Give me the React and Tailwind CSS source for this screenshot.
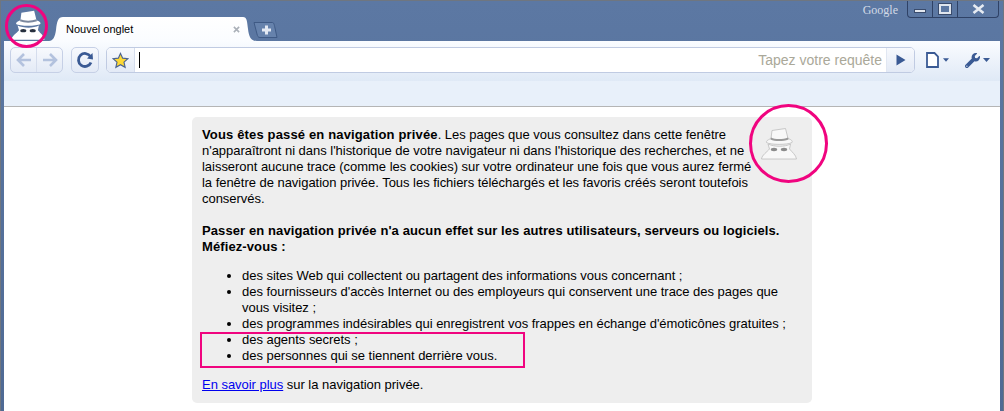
import React from "react";
import { FaWrench } from "react-icons/fa";

function Spy({ className, shadow }) {
  return (
    <svg viewBox="0 0 36 32" className={className}>
      <path d="M11 2.5 L24.5 0.5 L27 10.5 C30 11.5 32 13 31 14.5 C27 17 9 17 5.5 14.5 C5 12.5 8 11.5 10 10.5 Z" fill={shadow ? "#f8f8f8" : "#fff"} stroke={shadow ? "#bdbdbd" : "none"} strokeWidth="0.8" />
      <path d="M10 9.5 C14 11.5 22 11.5 27 9.5 L27.5 11.5 C22 13.5 14 13.5 9.5 11.5 Z" fill={shadow ? "#9a9a9a" : "#7b889e"} />
      <path d="M7 16 C13 19 24 19 29.5 16 L28.5 21 C31 24 35 27 35.5 31 H0.5 C1 27 6 24 8.5 21 Z" fill={shadow ? "#f8f8f8" : "#fff"} stroke={shadow ? "#bdbdbd" : "none"} strokeWidth="0.8" />
      <ellipse cx="13" cy="21.5" rx="3.2" ry="1.7" fill={shadow ? "#8a8a8a" : "#27303f"} />
      <ellipse cx="23" cy="21.5" rx="3.2" ry="1.7" fill={shadow ? "#8a8a8a" : "#27303f"} />
    </svg>
  );
}

function Btn({ className, children }) {
  return (
    <div className={"flex items-center justify-center border border-[#c6d0e6] bg-gradient-to-b from-[#f7f9fd] to-[#e3eaf6] " + className}>
      {children}
    </div>
  );
}

function Arrow({ flip }) {
  return (
    <svg viewBox="0 0 16 14" className={"w-[16px] h-[14px] " + (flip ? "-scale-x-100" : "")}>
      <path d="M8 1 L2 7 L8 13 M2.5 7 H15" fill="none" stroke="#b3c2de" strokeWidth="2.6" />
    </svg>
  );
}

export default function App() {
  const sans = "font-['Liberation_Sans',Arial,sans-serif]";
  return (
    <div className={"relative w-[1004px] h-[411px] overflow-hidden flex flex-col px-[3px] border border-[#6f7680] border-b-0 bg-gradient-to-b from-[#5c78a3] to-[#4f6a94] " + sans}>
      {/* tab strip */}
      <div className="relative h-[40px] shrink-0 flex items-end">
        <div className="ml-[7px] w-[34px] h-[31px] shrink-0">
          <Spy className="w-[34px] h-[31px]" />
        </div>
        <div className="relative ml-[4px] w-[208px] h-[24px] flex items-center shrink-0">
          <svg viewBox="0 0 208 24" className="absolute inset-0 w-[208px] h-[24px]">
            <defs>
              <linearGradient id="tab" x1="0" y1="0" x2="0" y2="1">
                <stop offset="0" stopColor="#ffffff" />
                <stop offset="1" stopColor="#fafcff" />
              </linearGradient>
            </defs>
            <path d="M0 24 C4 24 6 20 7 13 C8 4 9 0 14 0 H194 C198 0 198 4 199 12 C200 20 202 24 208 24 Z" fill="url(#tab)" />
          </svg>
          <span className="relative ml-[17px] text-[11px] leading-none text-black">Nouvel onglet</span>
          <svg viewBox="0 0 8 8" className="absolute left-[184px] top-[9px] w-[7px] h-[7px]">
            <path d="M1 1 L7 7 M7 1 L1 7" stroke="#aab0b8" strokeWidth="1.8" />
          </svg>
        </div>
        <div className="mb-[3px] -ml-[4px] w-[25px] h-[16px] flex items-center justify-center shrink-0">
          <svg viewBox="0 0 25 16" className="w-[25px] h-[16px]">
            <path d="M1 0.5 H19 C21 0.5 21 2 22 6 L24 15.5 H7 C5 15.5 4.5 14 4 12 Z" fill="#6682ac" stroke="#3f5a85" strokeWidth="1" />
            <path d="M13.5 3.5 V12.5 M9 8 H18" stroke="#e3e9f3" strokeWidth="3" />
          </svg>
        </div>
        <div className="flex-1" />
        <span className="self-start mt-0 mr-[9px] font-['Liberation_Serif',serif] text-[12px] leading-[18px] text-[#d3dae6]">Google</span>
        <div className="self-start mr-px flex h-[17px] border border-t-0 border-[#2f4266] rounded-b-[4px]">
          <div className="w-[25px] flex items-center justify-center border-r border-[#2f4266]">
            <div className="mt-[4px] w-[12px] h-[4px] bg-[#e3e8f0] border border-[#3a4c6d]" />
          </div>
          <div className="w-[25px] flex items-center justify-center border-r border-[#2f4266]">
            <div className="w-[12px] h-[10px] border-2 border-[#dfe5ee] outline outline-1 outline-[#3a4c6d]" />
          </div>
          <div className="flex-1 w-[40px] flex items-center justify-center">
            <svg viewBox="0 0 13 10" className="w-[13px] h-[10px]">
              <path d="M1.5 1 L11.5 9 M11.5 1 L1.5 9" stroke="#e6ebf2" strokeWidth="2.6" />
            </svg>
          </div>
        </div>
      </div>

      {/* toolbar */}
      <div className="h-[40px] shrink-0 flex items-start pt-[6px] pl-[6px] pr-[10px] bg-gradient-to-b from-[#fafcff] to-[#dfe9f6]">
        <Btn className="w-[53px] h-[26px] rounded-[5px]">
          <div className="flex-1 h-full flex items-center justify-center border-r border-[#d5dded]"><Arrow /></div>
          <div className="flex-1 h-full flex items-center justify-center"><Arrow flip /></div>
        </Btn>
        <Btn className="ml-[8px] w-[28px] h-[26px] rounded-[5px]">
          <svg viewBox="0 0 18 18" className="w-[18px] h-[18px]">
            <path d="M14.5 5.5 A6.5 6.5 0 1 0 15 11.5" fill="none" stroke="#3a5a94" strokeWidth="2.8" />
            <path d="M11 7.5 L17 8.5 L16.5 2 Z" fill="#3a5a94" />
          </svg>
        </Btn>
        <div className="ml-[7px] flex-1 h-[26px] flex rounded-[5px] border border-[#c0cbe2] overflow-hidden bg-white">
          <div className="w-[28px] flex items-center justify-center border-r border-[#d5dded] bg-gradient-to-b from-[#f7f9fd] to-[#e3eaf6]">
            <svg viewBox="0 0 18 18" className="w-[17px] h-[17px]">
              <path d="M9 1.5 L11.3 6.5 L16.8 7.1 L12.7 10.8 L13.9 16.2 L9 13.4 L4.1 16.2 L5.3 10.8 L1.2 7.1 L6.7 6.5 Z" fill="#fdd835" stroke="#4b6390" strokeWidth="1.2" />
            </svg>
          </div>
          <div className="flex-1 flex items-center pl-[4px] pr-[4px]">
            <div className="w-px h-[16px] bg-black" />
            <div className="flex-1" />
            <span className="text-[14px] leading-none text-[#aaa899]">Tapez votre requête</span>
          </div>
          <div className="w-[28px] flex items-center justify-center border-l border-[#e1e7f2] bg-gradient-to-b from-[#f7f9fd] to-[#e3eaf6]">
            <svg viewBox="0 0 10 12" className="w-[10px] h-[12px]">
              <path d="M0.5 0.5 L9.5 6 L0.5 11.5 Z" fill="#3a5a94" />
            </svg>
          </div>
        </div>
        <div className="ml-[11px] h-[26px] flex items-center gap-[4px]">
          <svg viewBox="0 0 13 16" className="w-[13px] h-[16px] shrink-0">
            <path d="M1 1 H8.5 L12 4.5 V15 H1 Z" fill="#fff" stroke="#3a5a94" strokeWidth="1.8" />
          </svg>
          <svg viewBox="0 0 7 4" className="w-[6px] h-[4px] shrink-0"><path d="M0 0 H7 L3.5 4 Z" fill="#3a5a94" /></svg>
        </div>
        <div className="ml-[16px] h-[26px] flex items-center gap-[3px]">
          <FaWrench className="w-[15px] h-[15px] text-[#3a5a94]" />
          <svg viewBox="0 0 7 4" className="w-[7px] h-[4px] shrink-0"><path d="M0 0 H7 L3.5 4 Z" fill="#3a5a94" /></svg>
        </div>
      </div>

      {/* bookmark strip */}
      <div className="h-[26px] shrink-0 bg-[#e8f0fa] border-b border-[#b5b5b5]" />

      {/* page */}
      <div className="flex-1 bg-white pt-[10px] pl-[188px] text-[13px] leading-[16px] tracking-[-0.03px] text-black">
        <div className="w-[620px] h-[286px] rounded-[5px] bg-[#eeeeee] p-[10px]">
          <Spy className="float-right mr-[5px] mt-px w-[36px] h-[32px]" shadow />
          <p className="whitespace-nowrap">
            <b className="tracking-[0.15px]">Vous êtes passé en navigation privée</b>. Les pages que vous consultez dans cette fenêtre<br />
            n'apparaîtront ni dans l'historique de votre navigateur ni dans l'historique des recherches, et ne<br />
            laisseront aucune trace (comme les cookies) sur votre ordinateur une fois que vous aurez fermé<br />
            la fenêtre de navigation privée. Tous les fichiers téléchargés et les favoris créés seront toutefois<br />
            conservés.
          </p>
          <p className="mt-[16px] font-bold whitespace-nowrap tracking-[0.1px]">
            Passer en navigation privée n'a aucun effet sur les autres utilisateurs, serveurs ou logiciels.<br />
            Méfiez-vous :
          </p>
          <ul className="mt-[13px] pl-[40px] list-disc whitespace-nowrap">
            <li>des sites Web qui collectent ou partagent des informations vous concernant ;</li>
            <li>des fournisseurs d'accès Internet ou des employeurs qui conservent une trace des pages que<br />vous visitez ;</li>
            <li>des programmes indésirables qui enregistrent vos frappes en échange d'émoticônes gratuites ;</li>
            <li>des agents secrets ;</li>
            <li>des personnes qui se tiennent derrière vous.</li>
          </ul>
          <p className="mt-[13px]">
            <a href="#" className="text-[#0000ee] underline">En savoir plus</a> sur la navigation privée.
          </p>
        </div>
      </div>

      {/* annotations */}
      <div className="absolute left-[4px] top-[3px] w-[43px] h-[44px] rounded-full border-[3px] border-[#f0047f]" />
      <div className="absolute left-[748px] top-[103px] w-[79px] h-[79px] rounded-full border-[3px] border-[#f0047f]" />
      <div className="absolute left-[199px] top-[331px] w-[325px] h-[36px] border-2 border-[#f0047f]" />
    </div>
  );
}
